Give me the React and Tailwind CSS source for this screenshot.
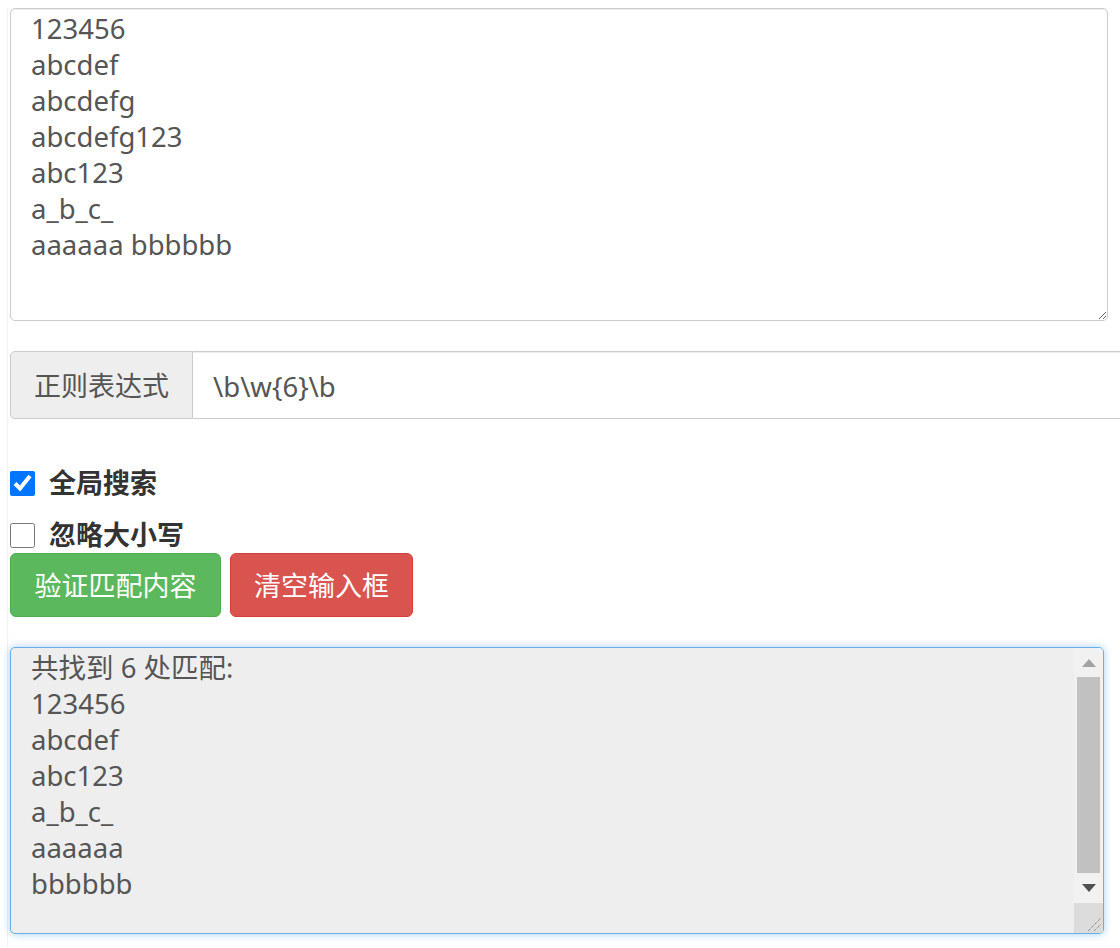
import React, { useState } from "react";

const SOURCE = ["123456", "abcdef", "abcdefg", "abcdefg123", "abc123", "a_b_c_", "aaaaaa bbbbbb"].join("\n");
const MATCHES = ["123456", "abcdef", "abc123", "a_b_c_", "aaaaaa", "bbbbbb"];

const FONT = "font-['Noto_Sans','Noto_Sans_CJK_SC',sans-serif]";

function FakeScrollbar() {
  return (
    <div className="flex w-[29px] shrink-0 flex-col bg-[#f1f1f1]">
      <div className="flex h-[29px] items-center justify-center">
        <svg width="14" height="8" viewBox="0 0 14 8">
          <polygon points="7,0 14,8 0,8" fill="#a3a3a3" />
        </svg>
      </div>
      <div className="mx-[3px] flex-1 bg-[#c1c1c1]" />
      <div className="flex h-[30px] items-center justify-center">
        <svg width="14" height="8" viewBox="0 0 14 8">
          <polygon points="0,0 14,0 7,8" fill="#505050" />
        </svg>
      </div>
      <div className="relative h-[30px] bg-[#dcdcdc]">
        <svg className="absolute bottom-[2px] right-[2px]" width="14" height="14" viewBox="0 0 14 14">
          <line x1="1" y1="14" x2="14" y2="1" stroke="#666" strokeWidth="1" strokeDasharray="1 1" />
          <line x1="7" y1="14" x2="14" y2="7" stroke="#666" strokeWidth="1" strokeDasharray="1 1" />
        </svg>
      </div>
    </div>
  );
}

export default function App() {
  const [source, setSource] = useState(SOURCE);
  const [pattern, setPattern] = useState("\\b\\w{6}\\b");
  const [global, setGlobal] = useState(true);
  const [ignoreCase, setIgnoreCase] = useState(false);

  return (
    <div className={`min-h-[948px] bg-white pt-[8px] pl-[7px] text-[27px] text-[#555] ${FONT}`}>
      <div className="min-h-[940px] border-l border-[#f3f3f3] pl-[2px]">
        <textarea
          value={source}
          onChange={(event) => setSource(event.target.value)}
          className="block h-[313px] w-[1098px] rounded-[5px] border border-[#ccc] px-[20px] pt-[2px] text-[27.5px] leading-[36px] text-[#555] shadow-[inset_0_1px_1px_rgba(0,0,0,0.075)] outline-none"
        />

        <div className="mt-[30px] flex h-[68px]">
          <span className="flex w-[183px] shrink-0 items-center justify-center rounded-l-[5px] border border-[#ccc] bg-[#eee] pt-[2px] text-[#555]">
            正则表达式
          </span>
          <input
            value={pattern}
            onChange={(event) => setPattern(event.target.value)}
            className="min-w-0 flex-1 border-y border-[#ccc] bg-white px-[20px] pt-[3px] text-[27.5px] text-[#555] shadow-[inset_0_1px_1px_rgba(0,0,0,0.075)] outline-none"
          />
        </div>

        <div className="mt-[51px] flex flex-col">
          <label className="flex h-[26px] items-center gap-[14px] font-bold text-[#333]">
            <input type="checkbox" checked={global} onChange={() => setGlobal(!global)} className="m-0 h-[25px] w-[25px]" />
            全局搜索
          </label>
          <label className="mt-[26px] flex h-[26px] items-center gap-[14px] font-bold text-[#333]">
            <input type="checkbox" checked={ignoreCase} onChange={() => setIgnoreCase(!ignoreCase)} className="m-0 h-[25px] w-[25px]" />
            忽略大小写
          </label>
        </div>

        <div className="mt-[5px] flex gap-[9px]">
          <button className="h-[64px] w-[211px] rounded-[6px] border border-[#4cae4c] bg-[#5cb85c] pt-[3px] text-white">验证匹配内容</button>
          <button className="h-[64px] w-[183px] rounded-[6px] border border-[#d43f3a] bg-[#d9534f] pt-[3px] text-white">清空输入框</button>
        </div>

        <div className="mt-[30px] flex h-[287px] w-[1094px] overflow-hidden rounded-[5px] border border-[#66afe9] bg-[#eee] shadow-[0_0_8px_rgba(102,175,233,0.6)]">
          <div className="flex-1 whitespace-pre px-[20px] pt-[2px] text-[27.5px] leading-[36px] text-[#555]">
            {"共找到 " + MATCHES.length + " 处匹配:\n" + MATCHES.join("\n")}
          </div>
          <FakeScrollbar />
        </div>
      </div>
    </div>
  );
}
